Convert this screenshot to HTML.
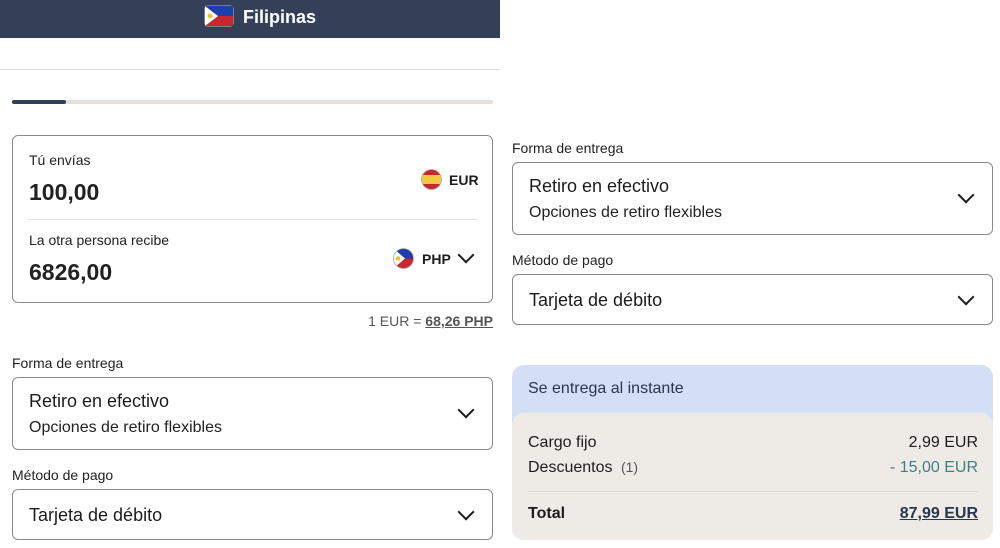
<!DOCTYPE html><html><head><meta charset="utf-8"><style>
*{margin:0;padding:0;box-sizing:border-box}
body{width:1000px;height:548px;background:#fff;font-family:"Liberation Sans",Arial,sans-serif;color:#1c1c1c;position:relative;overflow:hidden}
.a{position:absolute}
.hdr{left:0;top:0;width:500px;height:38px;background:#334057}
.lbl{font-size:14px;color:#222}
.box{border:1px solid #8a8a8a;border-radius:6px}
.chev{width:12px;height:12px;border-right:2.2px solid #1c1c1c;border-bottom:2.2px solid #1c1c1c;transform:rotate(45deg)}
.t17{font-size:18px}
.t15{font-size:16px;color:#222}
</style></head><body>
<div class="a hdr"></div>
<svg class="a" style="left:204px;top:5px" width="30" height="22" viewBox="0 0 30 22"><rect x="0.5" y="0.5" width="29" height="21" rx="3" fill="#bfbfbf"/><rect x="1" y="1" width="28" height="10" fill="#1d3faa"/><rect x="1" y="11" width="28" height="10" fill="#c8272f"/><path d="M1 1 L14 11 L1 21Z" fill="#fff"/><circle cx="6" cy="11" r="2.5" fill="#f1c232"/></svg>
<div class="a" style="left:243px;top:7px;font-size:18px;font-weight:bold;color:#fff">Filipinas</div>
<div class="a" style="left:0;top:69px;width:500px;height:1px;background:#dcdce4"></div>
<div class="a" style="left:12px;top:100px;width:481px;height:4px;background:#e4e1dc;border-radius:2px"></div>
<div class="a" style="left:12px;top:100px;width:54px;height:4px;background:#334057;border-radius:2px"></div>

<div class="a box" style="left:12px;top:135px;width:481px;height:168px"></div>
<div class="a lbl" style="left:29px;top:152px">Tú envías</div>
<div class="a" style="left:29px;top:179px;font-size:23px;font-weight:bold;color:#222">100,00</div>
<div class="a" style="left:28px;top:219px;width:449px;height:1px;background:#ddd"></div>
<div class="a lbl" style="left:29px;top:232px">La otra persona recibe</div>
<div class="a" style="left:29px;top:259px;font-size:23px;font-weight:bold;color:#222">6826,00</div>
<svg class="a" style="left:421px;top:169px" width="21" height="21" viewBox="0 0 21 21"><clipPath id="c1"><circle cx="10.5" cy="10.5" r="10"/></clipPath><g clip-path="url(#c1)"><rect width="21" height="21" fill="#c8272f"/><rect y="6" width="21" height="9" fill="#f3c845"/></g><circle cx="10.5" cy="10.5" r="10" fill="none" stroke="#aaa" stroke-width=".8"/></svg>
<div class="a" style="left:449px;top:172px;font-size:14px;font-weight:bold">EUR</div>
<svg class="a" style="left:393px;top:248px" width="21" height="21" viewBox="0 0 21 21"><clipPath id="c2"><circle cx="10.5" cy="10.5" r="10"/></clipPath><g clip-path="url(#c2)"><rect width="21" height="11" fill="#1d3faa"/><rect y="10.5" width="21" height="11" fill="#c8272f"/><path d="M0 0 L12 10.5 L0 21Z" fill="#fff"/><circle cx="5" cy="10.5" r="2.3" fill="#f1c232"/></g><circle cx="10.5" cy="10.5" r="10" fill="none" stroke="#aaa" stroke-width=".8"/></svg>
<div class="a" style="left:422px;top:251px;font-size:14px;font-weight:bold">PHP</div>
<div class="a chev" style="left:460px;top:249px"></div>
<div class="a" style="right:507px;top:313px;font-size:14px;color:#555">1 EUR = <span style="text-decoration:underline;font-weight:bold;color:#555">68,26 PHP</span></div>

<div class="a lbl" style="left:12px;top:355px">Forma de entrega</div>
<div class="a box" style="left:12px;top:377px;width:481px;height:73px"></div>
<div class="a t17" style="left:29px;top:391px">Retiro en efectivo</div>
<div class="a t15" style="left:29px;top:419px">Opciones de retiro flexibles</div>
<div class="a chev" style="left:460px;top:404px"></div>
<div class="a lbl" style="left:12px;top:467px">Método de pago</div>
<div class="a box" style="left:12px;top:489px;width:481px;height:51px"></div>
<div class="a t17" style="left:29px;top:505px">Tarjeta de débito</div>
<div class="a chev" style="left:460px;top:506px"></div>

<div class="a lbl" style="left:512px;top:140px">Forma de entrega</div>
<div class="a box" style="left:512px;top:162px;width:481px;height:73px"></div>
<div class="a t17" style="left:529px;top:176px">Retiro en efectivo</div>
<div class="a t15" style="left:529px;top:204px">Opciones de retiro flexibles</div>
<div class="a chev" style="left:960px;top:189px"></div>
<div class="a lbl" style="left:512px;top:252px">Método de pago</div>
<div class="a box" style="left:512px;top:274px;width:481px;height:51px"></div>
<div class="a t17" style="left:529px;top:290px">Tarjeta de débito</div>
<div class="a chev" style="left:960px;top:291px"></div>

<div class="a" style="left:512px;top:365px;width:481px;height:175px;background:#d3dff5;border-radius:12px"></div>
<div class="a" style="left:528px;top:380px;font-size:16px;color:#2a3550">Se entrega al instante</div>
<div class="a" style="left:512px;top:413px;width:481px;height:127px;background:#eeebe7;border-radius:12px"></div>
<div class="a t15" style="left:528px;top:434px;color:#1c1c1c">Cargo fijo</div>
<div class="a t15" style="right:22px;top:434px;color:#1c1c1c">2,99 EUR</div>
<div class="a t15" style="left:528px;top:459px;color:#1c1c1c">Descuentos <span style="font-size:14px;color:#555;margin-left:4px">(1)</span></div>
<div class="a t15" style="right:22px;top:459px;color:#3f7f86">- 15,00 EUR</div>
<div class="a" style="left:528px;top:491px;width:450px;height:1px;background:#dcd8d3"></div>
<div class="a" style="left:528px;top:505px;font-size:16px;font-weight:bold">Total</div>
<div class="a" style="right:22px;top:505px;font-size:16px;font-weight:bold;color:#2a3550;text-decoration:underline">87,99 EUR</div>
</body></html>
